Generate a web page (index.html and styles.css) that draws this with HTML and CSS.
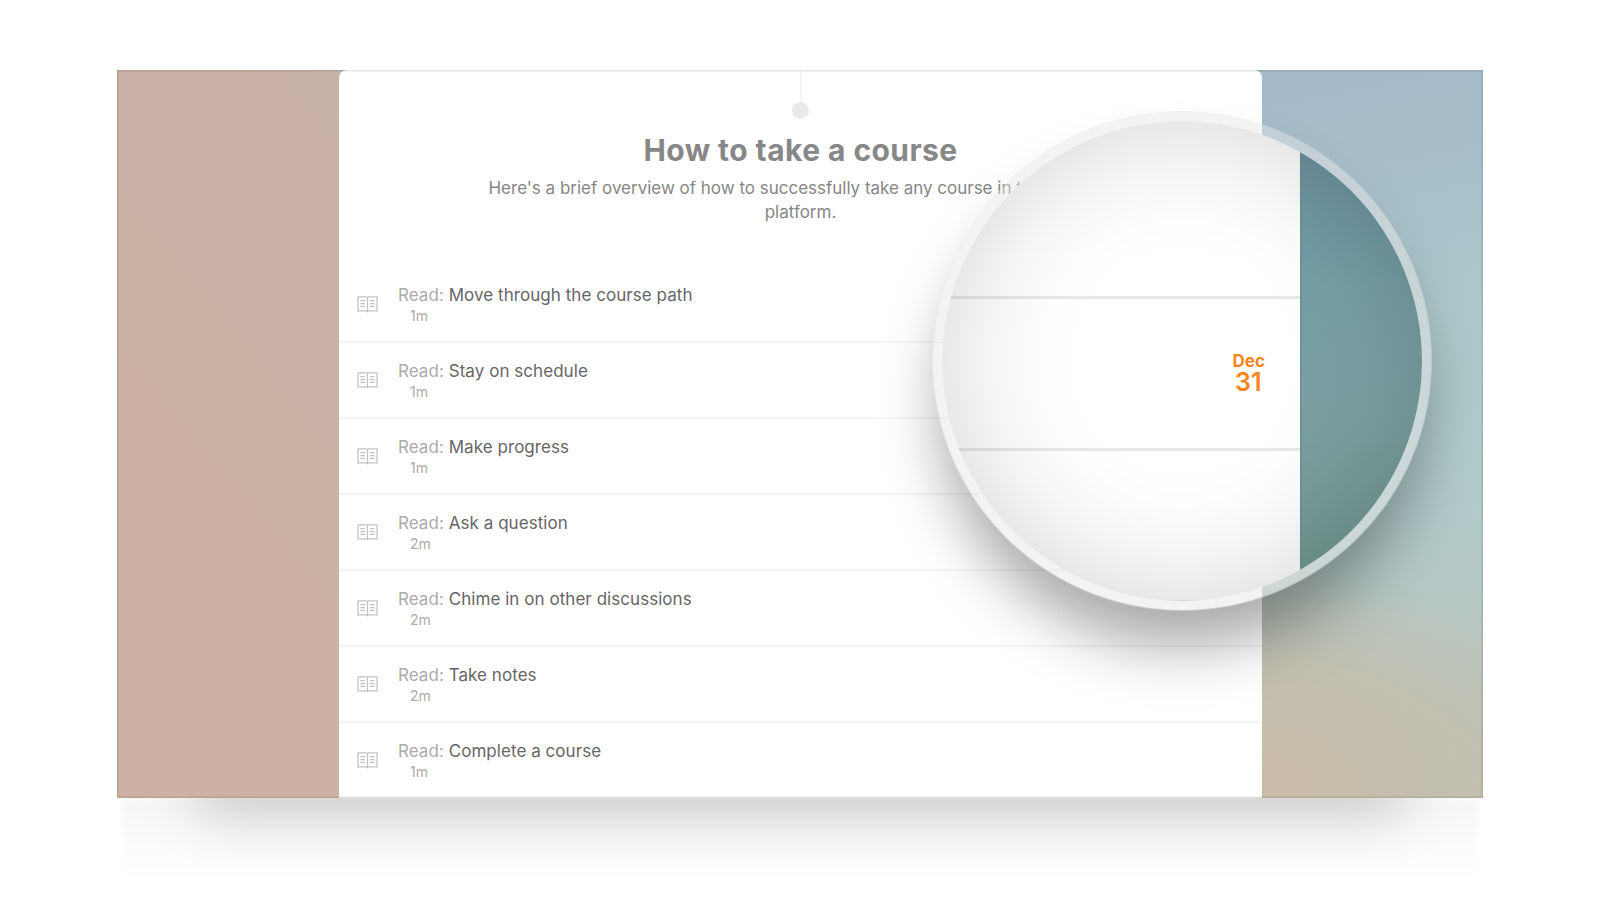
FILE: index.html
```
<!DOCTYPE html>
<html lang="en">
<head>
  <meta charset="UTF-8">
  <meta name="viewport" content="width=device-width, initial-scale=1.0">
  <title>How to take a course</title>
  <link rel="stylesheet" href="styles.css">
</head>
<body>
  <svg class="sprite" width="0" height="0">
    <symbol id="book" viewBox="0 0 22 17">
      <path d="M1 .6h9q1 0 1 1v15q0-1.300-1-1.300H1zM21 .6h-9q-1 0-1 1v15q0-1.300 1-1.300h9z"/>
      <path d="M3.500 4.500H8.500M3.500 7.500H8.500M3.500 10.500H8.500M13.500 4.500h5M13.500 7.500h5M13.500 10.500h5"/>
    </symbol>
  </svg>

  <div class="frame">
    <div class="side side-left"></div>
    <div class="card">
      <div class="header">
        <div class="line"></div>
        <div class="dot"></div>
        <h1>How to take a course</h1>
        <p><span class="first">Here's a brief overview of how to successfully take any course in the</span><span>platform.</span></p>
      </div>
      <ul class="items">
        <li><svg class="icon"><use href="#book"/></svg><div><div class="name"><span>Read:</span> Move through the course path</div><div class="time">1m</div></div></li>
        <li><svg class="icon"><use href="#book"/></svg><div><div class="name"><span>Read:</span> Stay on schedule</div><div class="time">1m</div></div></li>
        <li><svg class="icon"><use href="#book"/></svg><div><div class="name"><span>Read:</span> Make progress</div><div class="time">1m</div></div></li>
        <li><svg class="icon"><use href="#book"/></svg><div><div class="name"><span>Read:</span> Ask a question</div><div class="time">2m</div></div></li>
        <li><svg class="icon"><use href="#book"/></svg><div><div class="name"><span>Read:</span> Chime in on other discussions</div><div class="time">2m</div></div></li>
        <li><svg class="icon"><use href="#book"/></svg><div><div class="name"><span>Read:</span> Take notes</div><div class="time">2m</div></div></li>
        <li><svg class="icon"><use href="#book"/></svg><div><div class="name"><span>Read:</span> Complete a course</div><div class="time">1m</div></div></li>
      </ul>
    </div>
    <div class="side side-right"></div>
  </div>

  <!-- magnifier over the due date -->
  <div class="lens">
    <div class="lens-card">
      <div class="lens-row"></div>
      <div class="lens-row due">
        <div class="date"><span class="month">Dec</span><span class="day">31</span></div>
      </div>
      <div class="lens-row"></div>
    </div>
    <div class="lens-side"></div>
  </div>
</body>
</html>
```

FILE: styles.css
```
* {
  box-sizing: border-box;
}

body {
  margin: 0;
  height: 900px;
  padding: 70px 117px 0;
  overflow: hidden;
  position: relative;
  background-color: #fff;
  font-family: Inter, "Liberation Sans", sans-serif;
}

.sprite {
  position: absolute;
}

.frame {
  position: relative;
  display: flex;
  width: 1366px;
  height: 728px;
  background: linear-gradient(90deg, #c5b3a6 50%, #a5bbc8 50%);
  box-shadow: 0 96px 56px -80px rgba(0, 0, 0, 0.19);
}

/* thin dark edge on top of everything in the frame */
.frame::after {
  content: "";
  position: absolute;
  inset: 0;
  box-shadow: inset 0 0 0 1px rgba(0, 0, 0, 0.04), inset 0 0 0 2px rgba(0, 0, 0, 0.05);
}

/* long soft shadow below */
.frame::before {
  content: "";
  position: absolute;
  z-index: -1;
  top: 100%;
  left: 5px;
  right: 5px;
  height: 85px;
  background: linear-gradient(rgba(0, 0, 0, 0.035), rgba(0, 0, 0, 0.015) 50%, transparent);
  filter: blur(3px);
}

.side {
  width: 222px;
}

.side-left {
  background: linear-gradient(50deg, #cdb1a4 0%, #cbb1a5 88%, #c8b3a5 94%, #c5b3a6 100%);
}

.side-right {
  width: 221px;
  background: radial-gradient(ellipse 330px 240px at 0 100%, #c9bba8 10%, #c3bfae 50%, rgba(190, 194, 182, 0) 100%),
    linear-gradient(168deg, #a5bbc9 4%, #a8c0ca 20%, #adc8cb 36%, #b0cbcc 52%, #b2c9c7 66%, #b8c5bf 82%, #c0c0b0 100%);
}

.card {
  width: 923px;
  background-color: #fff;
  border-radius: 8px 8px 0 0;
  overflow: hidden;
}

.header {
  display: flex;
  flex-direction: column;
  align-items: center;
  height: 197px;
}

.line {
  width: 2px;
  height: 32px;
  background-color: #f5f5f5;
}

.dot {
  width: 17px;
  height: 17px;
  border-radius: 50%;
  background-color: #e9e9e9;
}

.header h1 {
  margin: 13px 0 0;
  font-size: 30px;
  line-height: 36px;
  font-weight: 700;
  letter-spacing: 0.43px;
  color: #878787;
}

.header p {
  display: flex;
  flex-direction: column;
  align-items: center;
  width: 624px;
  margin: 8px 0 0;
  font-size: 17px;
  line-height: 24px;
  color: #868686;
}

.header .first {
  width: 100%;
  letter-spacing: -0.01px;
}

.items {
  margin: 0;
  padding: 0;
  list-style: none;
}

.items li {
  display: flex;
  height: 76px;
  padding-left: 18px;
  border-bottom: 2px solid #f4f4f4;
}

.icon {
  width: 21px;
  height: 17px;
  margin: 29px 20px 0 0;
  fill: none;
  stroke: #c2c2c2;
  stroke-width: 1.3;
}

.name {
  margin-top: 17px;
  font-size: 17px;
  line-height: 22px;
  letter-spacing: 0.05px;
  color: #666;
}

.name span {
  color: #ababab;
}

.time {
  margin: 1px 0 0 12px;
  font-size: 14px;
  line-height: 18px;
  color: #ababab;
}

.lens {
  position: absolute;
  top: 111px;
  left: 932px;
  display: flex;
  width: 500px;
  height: 500px;
  border: 10px solid rgba(230, 230, 230, 0.48);
  border-radius: 50%;
  background-color: #fff;
  background-clip: padding-box;
  box-shadow: 0 44px 60px -8px rgba(0, 0, 0, 0.34);
  overflow: hidden;
}

/* vignette */
.lens::after {
  content: "";
  position: absolute;
  inset: 0;
  border-radius: 50%;
  box-shadow: inset 0 0 125px rgba(0, 0, 0, 0.17);
}

.lens-card {
  width: 358px;
}

.lens-row {
  height: 152px;
  border-bottom: 3px solid #e9e9e9;
}

.lens-row:first-child {
  height: 178px;
}

.due {
  display: flex;
  justify-content: flex-end;
  padding: 52px 35px 0 0;
}

.date {
  display: flex;
  flex-direction: column;
  align-items: center;
  color: #f8861d;
}

.month {
  font-size: 17px;
  line-height: 20px;
  font-weight: 700;
}

.day {
  margin-right: 1px;
  font-size: 25px;
  line-height: 23px;
  font-weight: 600;
}

.lens-side {
  flex: 1;
  border-left: 2px solid #6b9598;
  background: linear-gradient(#6a929f, #769fa5 35%, #7ca1a3 60%, #759a93 90%);
}
```
